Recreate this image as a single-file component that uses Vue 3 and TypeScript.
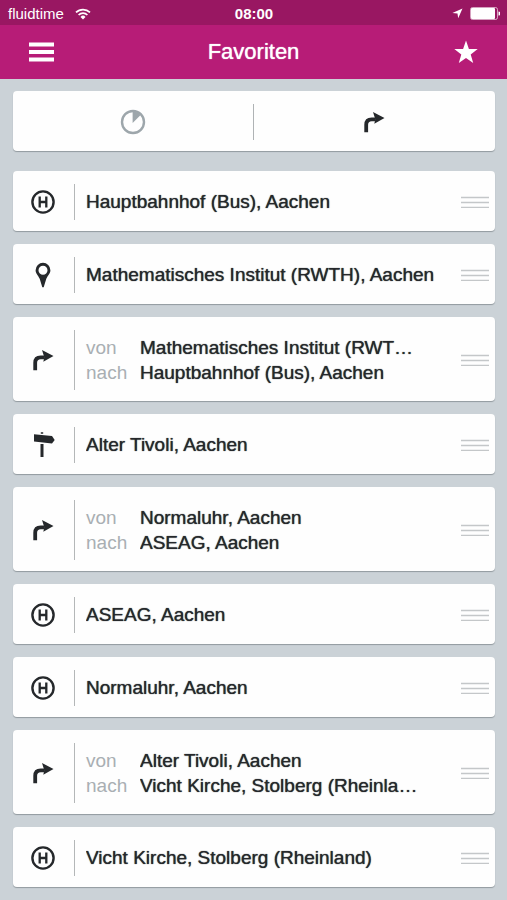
<script setup lang="ts">
import { ref } from 'vue'

type StopKind = 'station' | 'place' | 'sign'
interface StopFavorite {
  id: number
  kind: StopKind
  name: string
}
interface RouteFavorite {
  id: number
  kind: 'route'
  from: string
  to: string
}
type Favorite = StopFavorite | RouteFavorite

const favorites = ref<Favorite[]>([
  { id: 1, kind: 'station', name: 'Hauptbahnhof (Bus), Aachen' },
  { id: 2, kind: 'place', name: 'Mathematisches Institut (RWTH), Aachen' },
  { id: 3, kind: 'route', from: 'Mathematisches Institut (RWTH), Aachen', to: 'Hauptbahnhof (Bus), Aachen' },
  { id: 4, kind: 'sign', name: 'Alter Tivoli, Aachen' },
  { id: 5, kind: 'route', from: 'Normaluhr, Aachen', to: 'ASEAG, Aachen' },
  { id: 6, kind: 'station', name: 'ASEAG, Aachen' },
  { id: 7, kind: 'station', name: 'Normaluhr, Aachen' },
  { id: 8, kind: 'route', from: 'Alter Tivoli, Aachen', to: 'Vicht Kirche, Stolberg (Rheinland)' },
  { id: 9, kind: 'station', name: 'Vicht Kirche, Stolberg (Rheinland)' },
])
</script>

<template>
  <div class="app">
    <header class="header">
      <div class="status">
        <div class="carrier">
          <span>fluidtime</span>
          <svg class="wifi" viewBox="0 0 16 12" aria-hidden="true">
            <path d="M1 4.4a10 10 0 0 1 14 0M3.6 7a6.3 6.3 0 0 1 8.8 0" fill="none" stroke="currentColor" stroke-width="1.7" />
            <path d="M8 11.4 5.5 8.9a3.5 3.5 0 0 1 5 0z" fill="currentColor" />
          </svg>
        </div>
        <time class="clock">08:00</time>
        <div class="indicators">
          <svg class="location" viewBox="0 0 11 11" aria-hidden="true">
            <path d="M10.5.5 6.2 10.3 5.5 5.6.4 4.9z" fill="currentColor" />
          </svg>
          <svg class="battery" viewBox="0 0 30 13" aria-hidden="true">
            <rect x=".5" y=".5" width="27" height="12" rx="2" fill="none" stroke="currentColor" stroke-opacity=".6" />
            <rect x="1" y="1" width="24" height="11" rx="1" fill="currentColor" />
            <path d="M28.5 4.5a2 2 0 0 1 0 4z" fill="currentColor" />
          </svg>
        </div>
      </div>
      <nav class="bar">
        <button class="bar-button" type="button" aria-label="Menü">
          <svg class="menu-icon" viewBox="0 0 25 20" aria-hidden="true">
            <path d="M0 2.5h25M0 10h25M0 17.5h25" stroke="currentColor" stroke-width="4" />
          </svg>
        </button>
        <h1 class="title">Favoriten</h1>
        <button class="bar-button" type="button" aria-label="Favorit hinzufügen">
          <svg class="star-icon" viewBox="0 0 24 24" aria-hidden="true">
            <path d="m12 .5 2.9 8.4 8.8.1-7 5.4 2.5 8.6-7.2-5.1L4.8 23l2.5-8.6-7-5.4 8.8-.1z" fill="currentColor" />
          </svg>
        </button>
      </nav>
    </header>

    <main class="content">
      <div class="card filters">
        <button class="filter muted" type="button" aria-label="Abfahrten">
          <svg class="icon" viewBox="0 0 26 26" aria-hidden="true">
            <circle cx="13" cy="13" r="11" fill="none" stroke="currentColor" stroke-width="2.4" />
            <path d="M12.6 14V2.500a11 11 0 0 1 8 3.500z" fill="currentColor" />
          </svg>
        </button>
        <button class="filter" type="button" aria-label="Verbindungen">
          <svg class="icon" viewBox="0 0 26 26" aria-hidden="true">
            <path d="M5.2 23.2v-7.4q0-5.5 5.5-5.5h4" fill="none" stroke="currentColor" stroke-width="3.8" />
            <path d="m12 3 11.500 6-10.200 5.800 1-4.500z" fill="currentColor" />
          </svg>
        </button>
      </div>

      <ul class="list">
        <li v-for="favorite in favorites" :key="favorite.id" class="card row" :class="{ route: favorite.kind === 'route' }">
          <div class="kind">
            <svg class="icon" viewBox="0 0 26 26" aria-hidden="true">
              <template v-if="favorite.kind === 'station'">
                <circle cx="13" cy="13" r="10.6" fill="none" stroke="currentColor" stroke-width="2.4" />
                <path d="M9.7 7.5v11M16.3 7.5v11M9.700 13h6.600" fill="none" stroke="currentColor" stroke-width="2.3" />
              </template>
              <path
                v-else-if="favorite.kind === 'place'"
                d="M13 .8a7.4 7.4 0 0 1 7.4 7.4c0 3.4-2.7 5.4-4.1 8.5L13.7 25.2h-1.4L9.7 16.7C8.3 13.6 5.6 11.6 5.6 8.2A7.4 7.4 0 0 1 13 .8zm0 3a4.5 4.5 0 1 0 0 9 4.5 4.5 0 0 0 0-9z"
                fill="currentColor"
                fill-rule="evenodd"
              />
              <template v-else-if="favorite.kind === 'sign'">
                <path d="m4 2.2 18 1.9 2.7 3.9-2.7 3.6L4 9.4z" fill="currentColor" />
                <path d="M10.5 12h3v13h-3zM10.8.2h2.4v1.6h-2.4z" fill="currentColor" />
              </template>
              <template v-else>
                <path d="M5.2 23.2v-7.4q0-5.5 5.5-5.5h4" fill="none" stroke="currentColor" stroke-width="3.8" />
                <path d="m12 3 11.5 6-10.2 5.8 1-4.5z" fill="currentColor" />
              </template>
            </svg>
          </div>
          <dl v-if="favorite.kind === 'route'" class="trip">
            <dt>von</dt>
            <dd>{{ favorite.from }}</dd>
            <dt>nach</dt>
            <dd>{{ favorite.to }}</dd>
          </dl>
          <span v-else class="name">{{ favorite.name }}</span>
          <button class="handle" type="button" aria-label="Verschieben">
            <svg class="grip" viewBox="0 0 28 12" aria-hidden="true">
              <path d="M0 1.5h28M0 6.5h28M0 11.5h28" stroke="currentColor" stroke-width="1.4" />
            </svg>
          </button>
        </li>
      </ul>
    </main>
  </div>
</template>

<style>
body {
  background: #cbd2d7;
}
</style>

<style scoped>
.app {
  min-height: 100vh;
  color: #25282b;
  background: #cbd2d7;
  font-family: "Liberation Sans", Arial, sans-serif;
}
button {
  padding: 0;
  border: 0;
  background: none;
  color: inherit;
  cursor: pointer;
}
svg {
  display: block;
}
.header {
  color: #fff;
  background: #b71c77;
}
.status {
  display: grid;
  grid-template-columns: 1fr auto 1fr;
  align-items: center;
  height: 25px;
  padding: 2px 7px 0 8px;
  box-sizing: border-box;
  background: #991762;
  font-size: 15px;
}
.carrier {
  display: flex;
  align-items: center;
  gap: 11px;
}
.wifi {
  width: 16px;
  height: 12px;
}
.clock {
  font-weight: bold;
}
.indicators {
  display: flex;
  justify-content: flex-end;
  align-items: center;
  gap: 7px;
}
.location {
  width: 11px;
  height: 11px;
}
.battery {
  width: 30px;
  height: 13px;
}
.bar {
  display: grid;
  grid-template-columns: 58px 1fr 58px;
  align-items: center;
  height: 54px;
  padding: 0 12px;
}
.bar-button {
  display: flex;
  justify-content: center;
  align-items: center;
  height: 44px;
}
.menu-icon {
  width: 25px;
  height: 20px;
}
.star-icon {
  width: 24px;
  height: 24px;
}
.title {
  margin: 0;
  text-align: center;
  font-size: 22px;
  font-weight: normal;
  text-shadow: 0 0 1px currentColor;
}
.content {
  padding: 12px 12px 13px 13px;
}
.card {
  box-sizing: border-box;
  border-radius: 4px;
  background: #fefefe;
  box-shadow: 0 1px 1px #929a9f;
}
.filters {
  display: grid;
  grid-template-columns: 1fr 1fr;
  align-items: center;
  height: 60px;
  padding: 1px 2px 0 0;
}
.filter {
  display: flex;
  justify-content: center;
  align-items: center;
  height: 36px;
}
.filter + .filter {
  border-left: 1px solid #afb3b5;
}
.muted {
  color: #9da6ab;
}
.icon {
  width: 26px;
  height: 26px;
}
.list {
  display: grid;
  gap: 13px;
  margin: 20px 0 0;
  padding: 0;
  list-style: none;
}
.row {
  display: flex;
  align-items: center;
  height: 60px;
  padding: 1px 6px 0 0;
}
.route {
  height: 84px;
}
.kind {
  display: flex;
  flex: none;
  justify-content: center;
  align-items: center;
  align-self: stretch;
  width: 60px;
  margin: 12px 0 11px;
  padding-right: 1px;
  border-right: 1px solid #b4b7b8;
}
.name,
.trip {
  flex: 1;
  min-width: 0;
  margin: 0 12px 0 11px;
  font-size: 19px;
  line-height: 25px;
}
.name,
.trip dd {
  overflow: hidden;
  text-overflow: ellipsis;
  white-space: nowrap;
  text-shadow: 0 0 1px currentColor;
}
.trip {
  display: grid;
  grid-template-columns: 54px 1fr;
  margin-right: 42px;
}
.trip dt {
  color: #a9afb3;
}
.trip dd {
  min-width: 0;
  margin: 0;
}
.handle {
  display: flex;
  flex: none;
  align-items: center;
  height: 44px;
  color: #c4c7c9;
}
.grip {
  width: 28px;
  height: 12px;
}
</style>
